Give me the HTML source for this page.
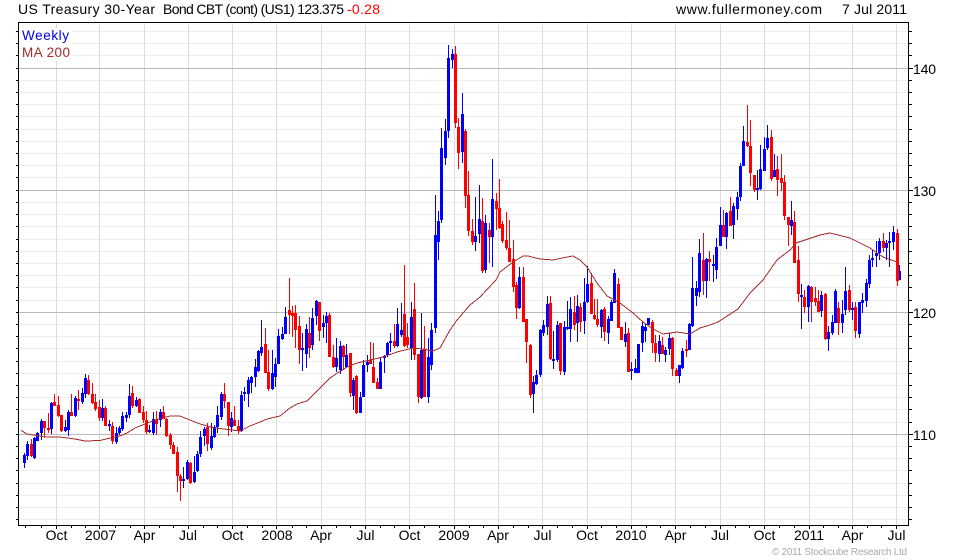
<!DOCTYPE html>
<html lang="en"><head><meta charset="utf-8"><title>US Treasury 30-Year Bond</title>
<style>
html,body{margin:0;padding:0;background:#fff;width:960px;height:560px;overflow:hidden}
svg{display:block}
text{font-family:"Liberation Sans",Arial,sans-serif;fill:#000}
.g{shape-rendering:crispEdges;fill:none}
</style></head><body>
<svg width="960" height="560" viewBox="0 0 960 560" xmlns="http://www.w3.org/2000/svg">
<rect width="960" height="560" fill="#fff"/>
<path class="g" stroke="#eeeeee" d="M19 31.5H908M19 43.5H908M19 55.5H908M19 80.5H908M19 92.5H908M19 104.5H908M19 116.5H908M19 129.5H908M19 141.5H908M19 153.5H908M19 165.5H908M19 177.5H908M19 202.5H908M19 214.5H908M19 226.5H908M19 239.5H908M19 251.5H908M19 263.5H908M19 275.5H908M19 287.5H908M19 300.5H908M19 324.5H908M19 336.5H908M19 348.5H908M19 361.5H908M19 373.5H908M19 385.5H908M19 397.5H908M19 409.5H908M19 422.5H908M19 446.5H908M19 458.5H908M19 470.5H908M19 483.5H908M19 495.5H908M19 507.5H908M19 519.5H908"/>
<path class="g" stroke="#dddddd" d="M56.5 23V525M99.5 23V525M144.5 23V525M188.5 23V525M232.5 23V525M276.5 23V525M321.5 23V525M365.5 23V525M409.5 23V525M454.5 23V525M498.5 23V525M542.5 23V525M587.5 23V525M631.5 23V525M675.5 23V525M720.5 23V525M764.5 23V525M809.5 23V525M852.5 23V525M896.5 23V525"/>
<path class="g" stroke="#bbbbbb" d="M19 68.5H908M19 190.5H908M19 312.5H908M19 434.5H908"/>
<rect x="21" y="28" width="51" height="33" fill="#fff"/>
<path class="g" stroke="#0000ff" d="M24.5 453V468M27.5 441V460M34.5 437V459M37.5 432V441M41.5 419V440M51.5 402V434M65.5 420V432M68.5 410V436M75.5 396V417M82.5 388V404M85.5 374V398M102.5 399V421M109.5 420V431M116.5 427V444M119.5 426V435M122.5 412V431M126.5 412V422M129.5 384V418M136.5 397V407M149.5 425V433M153.5 412V435M160.5 409V427M183.5 467V488M187.5 460V480M194.5 456V483M197.5 451V472M200.5 431V457M204.5 427V446M211.5 423V450M214.5 425V438M217.5 406V433M221.5 392V420M231.5 412V432M241.5 391V432M244.5 387V401M248.5 377V407M251.5 376V393M255.5 359V387M258.5 350V372M261.5 320V356M272.5 350V390M275.5 358V387M278.5 329V364M282.5 327V340M285.5 307V334M302.5 333V371M306.5 324V368M312.5 308V350M316.5 300V325M323.5 315V338M326.5 312V343M336.5 338V372M340.5 341V374M346.5 344V368M353.5 378V410M360.5 392V413M363.5 360V397M367.5 355V372M380.5 358V389M384.5 355V373M387.5 342V357M390.5 333V352M397.5 308V347M401.5 303V337M411.5 302V360M421.5 313V399M428.5 338V403M431.5 323V370M435.5 195V333M438.5 211V260M441.5 128V223M445.5 119V165M448.5 45V138M452.5 49V68M462.5 93V163M475.5 197V251M479.5 185V243M485.5 215V273M492.5 159V267M519.5 267V309M533.5 376V413M536.5 370V385M540.5 329V377M543.5 320V336M547.5 296V335M553.5 331V369M557.5 321V362M564.5 321V375M567.5 301V330M570.5 297V342M577.5 295V342M584.5 278V334M587.5 266V303M601.5 309V338M608.5 316V344M611.5 300V321M614.5 269V303M625.5 322V347M631.5 362V380M635.5 359V373M638.5 344V373M642.5 322V352M645.5 324V342M648.5 318V325M659.5 335V362M665.5 347V362M669.5 333V355M679.5 365V383M682.5 348V369M689.5 323V350M692.5 257V327M696.5 281V306M699.5 239V297M706.5 258V298M713.5 255V282M716.5 238V279M720.5 207V246M726.5 212V249M733.5 203V239M737.5 192V220M740.5 163V201M743.5 126V166M757.5 170V200M760.5 145V190M764.5 137V171M767.5 125V150M774.5 154V177M791.5 201V235M801.5 284V329M808.5 285V322M821.5 291V317M828.5 326V351M832.5 315V335M835.5 289V323M842.5 300V333M845.5 267V315M852.5 302V320M859.5 302V338M862.5 293V313M866.5 279V307M869.5 255V288M872.5 250V267M876.5 241V267M879.5 238V260M886.5 240V260M889.5 232V267M893.5 226V250M899.5 265V280"/>
<path class="g" stroke="#0000ff" stroke-width="3" d="M24.5 455V463M27.5 444V456M34.5 438V458M37.5 433V441M41.5 421V433M51.5 403V429M65.5 427V431M68.5 412V430M75.5 398V416M82.5 393V402M85.5 378V394M102.5 408V418M109.5 424V426M116.5 433V442M119.5 428V433M122.5 416V429M126.5 415V418M129.5 396V415M136.5 400V406M149.5 430V432M153.5 419V433M160.5 412V420M183.5 479V481M187.5 462V479M194.5 472V482M197.5 454V471M200.5 437V454M204.5 429V436M211.5 436V448M214.5 427V437M217.5 415V427M221.5 394V417M231.5 418V427M241.5 395V431M244.5 392V394M248.5 380V394M251.5 377V383M255.5 367V377M258.5 351V371M261.5 347V353M272.5 373V389M275.5 364V377M278.5 336V364M282.5 334V339M285.5 317V334M302.5 348V350M306.5 329V354M312.5 318V345M316.5 301V316M323.5 323V327M326.5 316V323M336.5 358V367M340.5 346V370M346.5 355V367M353.5 380V396M360.5 397V413M363.5 365V397M367.5 362V365M380.5 362V389M384.5 356V358M387.5 343V355M390.5 341V343M397.5 324V346M401.5 330V335M411.5 317V348M421.5 350V398M428.5 357V397M431.5 330V365M435.5 235V328M438.5 221V242M441.5 148V220M445.5 131V158M448.5 58V131M452.5 54V60M462.5 114V152M475.5 236V242M479.5 219V234M485.5 223V270M492.5 199V237M519.5 277V308M533.5 382V394M536.5 375V384M540.5 330V375M543.5 325V333M547.5 304V327M553.5 359V361M557.5 325V360M564.5 327V372M567.5 327V329M570.5 309V329M577.5 306V323M584.5 302V321M587.5 284V302M601.5 310V327M608.5 319V333M611.5 302V321M614.5 273V303M625.5 334V342M631.5 369V371M635.5 368V373M638.5 344V373M642.5 326V343M645.5 327V331M648.5 318V325M659.5 341V354M665.5 350V355M669.5 338V349M679.5 365V376M682.5 351V368M689.5 324V350M692.5 288V326M696.5 288V296M699.5 253V292M706.5 259V281M713.5 264V266M716.5 247V270M720.5 225V246M726.5 213V237M733.5 206V225M737.5 197V209M740.5 166V197M743.5 141V166M757.5 188V190M760.5 169V189M764.5 149V171M767.5 138V148M774.5 170V177M791.5 220V226M801.5 295V297M808.5 286V307M821.5 295V311M828.5 332V339M832.5 322V333M835.5 291V323M842.5 314V323M845.5 291V310M852.5 308V310M859.5 302V334M862.5 300V303M866.5 283V301M869.5 260V284M872.5 258V260M876.5 253V256M879.5 241V253M886.5 243V248M889.5 241V243M893.5 232V242M899.5 271V280"/>
<path class="g" stroke="#ff0000" d="M31.5 439V457M44.5 421V437M48.5 413V433M54.5 394V406M58.5 396V417M61.5 415V432M71.5 394V416M78.5 390V410M88.5 375V395M92.5 383V404M95.5 394V411M99.5 400V421M105.5 406V426M112.5 422V444M132.5 386V408M139.5 398V413M143.5 406V423M146.5 411V434M156.5 411V435M163.5 406V419M166.5 418V437M170.5 433V449M173.5 442V454M177.5 447V492M180.5 474V501M190.5 462V484M207.5 423V451M224.5 383V408M228.5 402V436M234.5 406V426M238.5 420V434M265.5 328V373M268.5 350V391M289.5 278V334M292.5 306V337M295.5 305V348M299.5 316V364M309.5 317V358M319.5 302V341M329.5 313V357M333.5 345V368M343.5 345V370M350.5 353V397M356.5 375V414M370.5 342V364M373.5 343V383M377.5 378V389M394.5 324V348M404.5 265V347M407.5 323V348M414.5 283V360M418.5 354V403M424.5 326V397M455.5 46V128M458.5 118V169M465.5 129V208M468.5 171V236M472.5 219V245M482.5 198V273M489.5 223V263M496.5 193V230M499.5 179V229M502.5 221V243M506.5 212V250M509.5 220V262M513.5 240V292M516.5 282V319M523.5 267V322M526.5 319V363M530.5 344V398M550.5 296V360M560.5 323V375M574.5 296V330M580.5 303V332M591.5 273V314M594.5 299V320M597.5 299V327M604.5 307V341M618.5 278V328M621.5 327V340M628.5 328V372M652.5 320V353M655.5 335V362M662.5 337V354M672.5 337V376M676.5 368V376M686.5 340V357M703.5 233V295M709.5 251V281M723.5 210V237M730.5 197V226M747.5 105V147M750.5 120V186M754.5 175V192M771.5 130V181M777.5 156V196M781.5 154V191M784.5 175V220M788.5 217V246M794.5 211V263M798.5 246V302M804.5 290V313M811.5 286V322M815.5 287V306M818.5 290V312M825.5 293V340M838.5 302V335M849.5 285V312M855.5 302V338M883.5 233V252M897.5 229V286"/>
<path class="g" stroke="#ff0000" stroke-width="3" d="M31.5 444V456M44.5 421V428M48.5 428V430M54.5 402V406M58.5 405V416M61.5 415V431M71.5 412V416M78.5 399V401M88.5 380V394M92.5 394V403M95.5 402V409M99.5 407V418M105.5 408V426M112.5 426V441M132.5 393V406M139.5 399V413M143.5 412V420M146.5 420V432M156.5 420V424M163.5 412V419M166.5 419V436M170.5 435V445M173.5 445V454M177.5 452V476M180.5 476V481M190.5 463V483M207.5 427V444M224.5 394V401M228.5 402V426M234.5 420V426M238.5 426V431M265.5 344V373M268.5 372V389M289.5 310V315M292.5 313V316M295.5 313V330M299.5 326V350M309.5 333V348M319.5 302V331M329.5 315V357M333.5 357V367M343.5 346V357M350.5 353V393M356.5 376V413M370.5 360V364M373.5 367V383M377.5 382V389M394.5 341V346M404.5 314V346M407.5 337V345M414.5 309V355M418.5 354V397M424.5 349V397M455.5 54V123M458.5 127V153M465.5 131V196M468.5 195V231M472.5 231V242M482.5 221V271M489.5 230V237M496.5 201V209M499.5 208V228M502.5 224V241M506.5 240V248M509.5 248V262M513.5 259V287M516.5 285V308M523.5 277V322M526.5 319V342M530.5 345V395M550.5 303V359M560.5 323V371M574.5 312V325M580.5 307V322M591.5 283V314M594.5 315V319M597.5 319V325M604.5 309V332M618.5 284V328M621.5 327V340M628.5 333V372M652.5 322V343M655.5 343V353M662.5 345V354M672.5 338V369M676.5 370V376M686.5 349V351M703.5 260V281M709.5 259V262M723.5 225V237M730.5 211V226M747.5 142V146M750.5 146V173M754.5 175V190M771.5 137V179M777.5 169V180M781.5 178V183M784.5 182V216M788.5 217V225M794.5 222V263M798.5 260V294M804.5 297V307M811.5 287V302M815.5 298V302M818.5 301V312M825.5 294V339M838.5 308V323M849.5 290V310M855.5 307V331M883.5 241V248M897.5 233V281"/>
<polyline class="g" stroke="#a52a2a" points="21,430.5 27,434 33,435 45,437 60,437 75,439 85,441 100,440.5 110,438 120,436 127,433 135,428 145,424 155,420 170,416 180,416 190,420 200,424 215,428 232,430 240,431 250,426 260,422 267,419 280,416 290,408 297,404 307,401 320,388 330,378 347,367 357,363 370,360 383,357 397,352 413,348 423,349 433,351 440,348 450,330 457,320 470,305 480,297 496,280 500,272 513,262 523,256 528,256 540,259 553,260 567,257 573,256 580,260 587,267 597,283 607,296 620,303 633,313 643,322 653,329 663,334 677,332 690,334 700,328 710,325 718,322 738,309 750,293 763,280 777,260 790,250 796,243 820,235 830,233 850,238 870,248 883,257 897,262"/>
<path class="g" stroke="#000" d="M18.5 22.5H908.5V525.5H18.5Z"/>
<path class="g" stroke="#000" d="M16 31.5H18M16 43.5H18M16 55.5H18M16 68.5H18M16 80.5H18M16 92.5H18M16 104.5H18M16 116.5H18M16 129.5H18M16 141.5H18M16 153.5H18M16 165.5H18M16 177.5H18M16 190.5H18M16 202.5H18M16 214.5H18M16 226.5H18M16 239.5H18M16 251.5H18M16 263.5H18M16 275.5H18M16 287.5H18M16 300.5H18M16 312.5H18M16 324.5H18M16 336.5H18M16 348.5H18M16 361.5H18M16 373.5H18M16 385.5H18M16 397.5H18M16 409.5H18M16 422.5H18M16 434.5H18M16 446.5H18M16 458.5H18M16 470.5H18M16 483.5H18M16 495.5H18M16 507.5H18M16 519.5H18"/>
<path class="g" stroke="#000" d="M909 31.5H912M909 43.5H912M909 55.5H912M909 68.5H913M909 80.5H912M909 92.5H912M909 104.5H912M909 116.5H912M909 129.5H912M909 141.5H912M909 153.5H912M909 165.5H912M909 177.5H912M909 190.5H913M909 202.5H912M909 214.5H912M909 226.5H912M909 239.5H912M909 251.5H912M909 263.5H912M909 275.5H912M909 287.5H912M909 300.5H912M909 312.5H913M909 324.5H912M909 336.5H912M909 348.5H912M909 361.5H912M909 373.5H912M909 385.5H912M909 397.5H912M909 409.5H912M909 422.5H912M909 434.5H913M909 446.5H912M909 458.5H912M909 470.5H912M909 483.5H912M909 495.5H912M909 507.5H912M909 519.5H912"/>
<path class="g" stroke="#000" d="M25.5 526V528M41.5 526V528M56.5 526V529M71.5 526V528M85.5 526V528M99.5 526V529M115.5 526V528M130.5 526V528M144.5 526V529M159.5 526V528M173.5 526V528M188.5 526V529M203.5 526V528M217.5 526V528M232.5 526V529M247.5 526V528M262.5 526V528M276.5 526V529M292.5 526V528M306.5 526V528M321.5 526V529M336.5 526V528M350.5 526V528M365.5 526V529M380.5 526V528M394.5 526V528M409.5 526V529M424.5 526V528M439.5 526V528M454.5 526V529M469.5 526V528M483.5 526V528M498.5 526V529M513.5 526V528M528.5 526V528M542.5 526V529M557.5 526V528M572.5 526V528M587.5 526V529M601.5 526V528M616.5 526V528M631.5 526V529M646.5 526V528M660.5 526V528M675.5 526V529M690.5 526V528M705.5 526V528M720.5 526V529M735.5 526V528M749.5 526V528M764.5 526V529M779.5 526V528M794.5 526V528M809.5 526V529M823.5 526V528M838.5 526V528M852.5 526V529M867.5 526V528M881.5 526V528M896.5 526V529"/>
<g font-size="14">
<text x="18" y="14" textLength="137">US Treasury 30-Year</text>
<text x="163" y="14" textLength="181">Bond CBT (cont) (US1) 123.375</text>
<text x="676" y="14" textLength="146">www.fullermoney.com</text>
<text x="842" y="14" textLength="65">7 Jul 2011</text>
</g>
<text x="347" y="14" font-size="14" style="fill:#ff0000" textLength="33">-0.28</text>
<text x="22" y="40" font-size="13.5" style="fill:#0000dd" textLength="47">Weekly</text>
<text x="22" y="57" font-size="13.5" style="fill:#a52a2a" textLength="48">MA 200</text>
<g font-size="14">
<text x="913" y="74" textLength="23">140</text>
<text x="913" y="196" textLength="23">130</text>
<text x="913" y="318" textLength="23">120</text>
<text x="913" y="440" textLength="23">110</text>
</g>
<g font-size="14" text-anchor="middle">
<text x="56.5" y="540">Oct</text><text x="100.5" y="540">2007</text><text x="144.5" y="540">Apr</text><text x="188" y="540">Jul</text><text x="232.5" y="540">Oct</text><text x="277" y="540">2008</text><text x="321" y="540">Apr</text><text x="365.5" y="540">Jul</text><text x="409.5" y="540">Oct</text><text x="454" y="540">2009</text><text x="498" y="540">Apr</text><text x="542.5" y="540">Jul</text><text x="587" y="540">Oct</text><text x="631" y="540">2010</text><text x="675.5" y="540">Apr</text><text x="720" y="540">Jul</text><text x="764.5" y="540">Oct</text><text x="809" y="540">2011</text><text x="852.5" y="540">Apr</text><text x="896.5" y="540">Jul</text>
</g>
<text x="772" y="555" font-size="10" style="fill:#aaaaaa" textLength="135">© 2011 Stockcube Research Ltd</text>
</svg>
</body></html>
